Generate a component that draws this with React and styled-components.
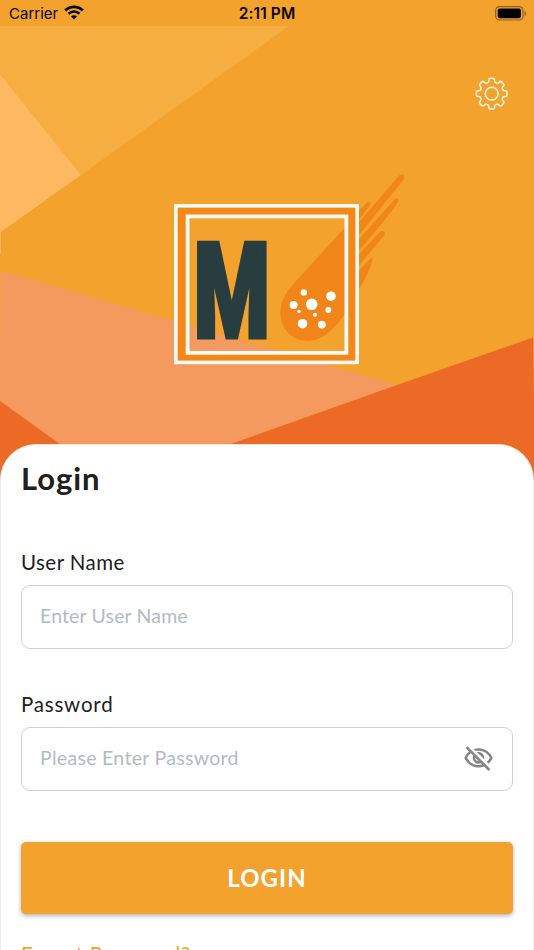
import React from 'react';
import styled, { createGlobalStyle } from 'styled-components';
import { MdOutlineVisibilityOff } from 'react-icons/md';

const GEAR_TEETH = 8;

// outline of the settings cog, corners softened with quadratic curves
function gearPath(c, outer, inner) {
  const pts = [];
  for (let i = 0; i < GEAR_TEETH; i++) {
    const a = (i * 360) / GEAR_TEETH;
    [
      [inner, -14],
      [outer, -10.5],
      [outer, 10.5],
      [inner, 14],
    ].forEach(([r, d]) => {
      const t = ((a + d) * Math.PI) / 180;
      pts.push([c + r * Math.sin(t), c - r * Math.cos(t)]);
    });
  }
  const n = pts.length;
  const toward = (p, q, k) => {
    const len = Math.hypot(q[0] - p[0], q[1] - p[1]);
    return [p[0] + ((q[0] - p[0]) * k) / len, p[1] + ((q[1] - p[1]) * k) / len];
  };
  return (
    pts
      .map((p, i) => {
        const s = toward(p, pts[(i + n - 1) % n], 1.6);
        const e = toward(p, pts[(i + 1) % n], 1.6);
        return `${i ? 'L' : 'M'}${s} Q${p} ${e}`;
      })
      .join(' ') + 'Z'
  );
}

function StatusBar() {
  return (
    <Status>
      <Carrier>
        Carrier
        <svg width="20" height="15" viewBox="0 0 20 15" fill="none" stroke="#000">
          <path d="M1.3 5.6C6.2 0.6 13.8 0.6 18.7 5.6" strokeWidth="2.9" />
          <path d="M4.5 8.8C7.6 5.8 12.4 5.8 15.5 8.8" strokeWidth="2.6" />
          <path d="M10 14.4L7 11.4C8.7 9.9 11.3 9.9 13 11.4Z" fill="#000" stroke="none" />
        </svg>
      </Carrier>
      <Time>2:11 PM</Time>
      <Battery>
        <svg width="32" height="15" viewBox="0 0 32 15">
          <rect x="0.7" y="0.7" width="27.3" height="13.3" rx="3.6" fill="none" stroke="#8d6122" strokeWidth="1.2" />
          <rect x="2.7" y="2.6" width="23.2" height="9.6" rx="1.8" fill="#000" />
          <path d="M29.6 4.9C31.6 5.8 31.6 8.9 29.6 9.8Z" fill="#8d6122" />
        </svg>
      </Battery>
    </Status>
  );
}

function Backdrop() {
  return (
    <BackdropSvg viewBox="0 26 534 460">
      <path d="M0 26H289L81 175L0 74Z" fill="#f6ae41" />
      <path d="M0 74L81 175L1 232V254H0Z" fill="#fdb860" />
      <path d="M1 271L397 385L231 444V486H0V355Z" fill="#f49a5f" />
      <path d="M533 337.5L397 385L231 444V486H534V400Z" fill="#ed6a26" />
      <path d="M0 401L60 444V486H0Z" fill="#ed6a26" />
    </BackdropSvg>
  );
}

function Logo() {
  return (
    <LogoSvg width="236" height="192" viewBox="172 174 236 192">
      <g transform="translate(270 165) scale(0.33333)" fill="#f28519">
        <path d="M240 171L70 357C45 386 31 412 31 442C31 492 66 528 113 528C155 528 195 492 226 445L250 400Z" />
        <path d="M255 150L290 113C296 108 304 111 300 119C294 130 280 145 255 180Z" />
        <path d="M250 191L387 32C394 24 408 31 402 42L255 224Z" />
        <path d="M250 242L374 103C380 96 388 101 384 110C370 135 300 220 250 275Z" />
        <path d="M250 285L330 201C337 193 349 202 343 211L250 321Z" />
        <path d="M250 334L300 282C306 277 310 280 307 288C296 322 282 350 250 400Z" />
      </g>
      <g fill="#fff">
        <circle cx="303.8" cy="292.4" r="3.2" />
        <circle cx="331" cy="296.2" r="4.8" />
        <circle cx="293.6" cy="305" r="4" />
        <circle cx="311.7" cy="304.3" r="5.8" />
        <circle cx="299" cy="311.5" r="1.8" />
        <circle cx="328.4" cy="310" r="3" />
        <circle cx="315" cy="314.8" r="2" />
        <circle cx="302.5" cy="323.7" r="4.8" />
        <circle cx="321.9" cy="324.6" r="3.9" />
      </g>
      <g fill="none">
        <rect x="182" y="211.3" width="169.5" height="146" stroke="#f48817" strokeWidth="8" />
        <rect x="175.8" y="205.8" width="181.4" height="156.6" stroke="#fcfaf7" strokeWidth="3.6" />
        <rect x="187.6" y="216.4" width="158.8" height="136.4" stroke="#fcfaf7" strokeWidth="3.8" />
      </g>
      <LogoLetter x="0" y="0" transform="translate(193.9 336.5) scale(0.655 1)">
        M
      </LogoLetter>
    </LogoSvg>
  );
}

export default function App() {
  return (
    <Screen>
      <GlobalStyle />
      <StatusBar />
      <Hero>
        <Backdrop />
        <SettingsButton aria-label="Settings">
          <svg width="36" height="36" viewBox="0 0 36 36" fill="none" stroke="#fff8ea" strokeWidth="1.5">
            <path d={gearPath(17.7, 15.6, 11.8)} strokeLinejoin="round" />
            <circle cx="17.7" cy="17.7" r="6.4" />
          </svg>
        </SettingsButton>
        <Logo />
      </Hero>
      <Card>
        <Title>Login</Title>
        <Field>
          <Label htmlFor="username" $spacing="0.45px">User Name</Label>
          <InputBox>
            <Input id="username" placeholder="Enter User Name" $spacing="0.15px" />
          </InputBox>
        </Field>
        <Field>
          <Label htmlFor="password" $spacing="0.8px">Password</Label>
          <InputBox>
            <Input id="password" type="password" placeholder="Please Enter Password" $spacing="0.3px" />
            <MdOutlineVisibilityOff size={31} color="#858585" />
          </InputBox>
        </Field>
        <LoginButton>LOGIN</LoginButton>
        <ForgotLink>Forgot Password?</ForgotLink>
      </Card>
    </Screen>
  );
}

/* =======================
   STYLES
======================= */

const GlobalStyle = createGlobalStyle`
  * {
    box-sizing: border-box;
  }

  body {
    margin: 0;
    overflow: hidden;
    background: #f3a22d;
  }
`;

const Screen = styled.div`
  display: flex;
  flex-direction: column;
  width: 534px;
  height: 950px;
  overflow: hidden;
  background: #f3a22d;
  font-family: Lato, 'Open Sans', sans-serif;
`;

const Status = styled.header`
  display: grid;
  grid-template-columns: 1fr auto 1fr;
  align-items: center;
  flex: none;
  height: 26px;
  padding: 1px 7px 0 9px;
  font-family: Inter, sans-serif;
  font-size: 15px;
  line-height: 25px;
  color: #0a0700;
`;

const Carrier = styled.div`
  display: flex;
  align-items: center;
  gap: 6px;

  svg {
    margin-top: -2px;
  }
`;

const Time = styled.div`
  margin-right: 2px;
  font-weight: 600;
  font-size: 15.5px;
  letter-spacing: 0.1px;
`;

const Battery = styled.div`
  display: flex;
  justify-content: flex-end;
`;

const Hero = styled.section`
  position: relative;
  flex: none;
  height: 418px;
`;

const BackdropSvg = styled.svg`
  position: absolute;
  top: 0;
  left: 0;
  width: 534px;
  height: 460px;
`;

const SettingsButton = styled.button`
  position: absolute;
  top: 50px;
  right: 24px;
  width: 36px;
  height: 36px;
  padding: 0;
  border: 0;
  background: none;

  svg {
    display: block;
  }
`;

const LogoSvg = styled.svg`
  position: absolute;
  top: 148px;
  left: 172px;
  overflow: visible;
`;

const LogoLetter = styled.text`
  font-family: Roboto, sans-serif;
  font-weight: 900;
  font-size: 132px;
  fill: #273d3f;
  stroke: #273d3f;
  stroke-width: 5px;
`;

const Card = styled.main`
  position: relative;
  display: flex;
  flex-direction: column;
  flex: none;
  height: 560px;
  padding: 13px 20px 0;
  border: 1px solid #eeeeee;
  border-top-color: #f8e8d8;
  border-radius: 36px 36px 0 0;
  background: #fff;
`;

const Title = styled.h1`
  margin: 0 0 45px;
  font-size: 31px;
  font-weight: 700;
  line-height: 40px;
  letter-spacing: 0.95px;
  color: #202020;
`;

const Field = styled.div`
  display: flex;
  flex-direction: column;
  margin-bottom: 36px;
`;

const Label = styled.label`
  height: 42px;
  font-size: 20.5px;
  line-height: 38px;
  letter-spacing: ${({ $spacing }) => $spacing};
  color: #1d1d1d;
`;

const InputBox = styled.div`
  display: flex;
  align-items: center;
  height: 64px;
  padding: 0 18px 1px;
  border: 1px solid #cfcfcf;
  border-radius: 9px;
`;

const Input = styled.input`
  flex: 1;
  min-width: 0;
  padding: 0 0 3px;
  border: 0;
  outline: 0;
  background: none;
  font-family: inherit;
  font-size: 19.5px;
  letter-spacing: ${({ $spacing }) => $spacing};

  &::placeholder {
    color: #b3bac5;
    opacity: 1;
  }
`;

const LoginButton = styled.button`
  flex: none;
  height: 72px;
  margin-top: 15px;
  padding: 0 0 2px;
  border: 0;
  border-radius: 5px;
  background: #f3a22d;
  box-shadow: 0 2px 4px rgba(0, 0, 0, 0.3);
  font-family: inherit;
  font-size: 24px;
  font-weight: 700;
  letter-spacing: 1px;
  color: #fff;
`;

const ForgotLink = styled.a`
  margin-top: 25px;
  font-size: 20.5px;
  line-height: 30px;
  letter-spacing: 0.65px;
  color: #f3a22d;
`;
